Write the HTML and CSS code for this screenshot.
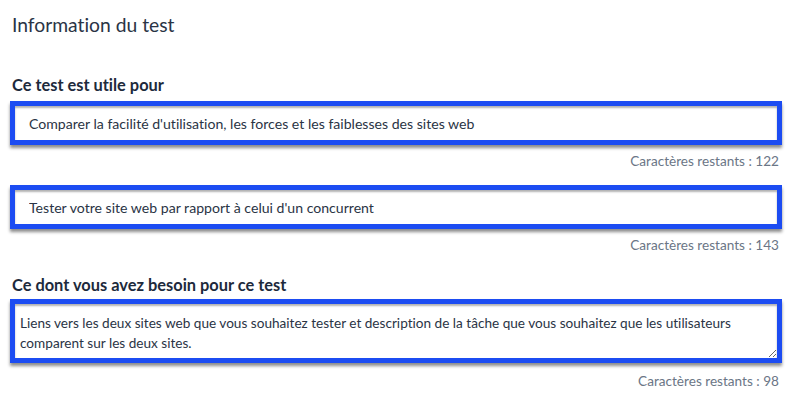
FILE: index.html
```html
<!DOCTYPE html>
<html lang="fr">
<head>
<meta charset="utf-8">
<link rel="stylesheet" href="styles.css">
</head>
<body>
<div class="page">
  <h1 class="title">Information du test</h1>

  <h2 class="label first">Ce test est utile pour</h2>
  <input class="field" type="text" value="Comparer la facilité d'utilisation, les forces et les faiblesses des sites web">
  <div class="counter">Caractères restants : 122</div>

  <input class="field second" type="text" value="Tester votre site web par rapport à celui d'un concurrent">
  <div class="counter">Caractères restants : 143</div>

  <h2 class="label">Ce dont vous avez besoin pour ce test</h2>
  <textarea class="area">Liens vers les deux sites web que vous souhaitez tester et description de la tâche que vous souhaitez que les utilisateurs comparent sur les deux sites.</textarea>
  <div class="counter last">Caractères restants : 98</div>
</div>
</body>
</html>
```

FILE: styles.css
```css
* { box-sizing: border-box; }
html, body {
  margin: 0;
  padding: 0;
  background: #ffffff;
}
.page {
  padding: 13px 13px 0 10px;
  display: flex;
  flex-direction: column;
  font-family: Lato, "Open Sans", sans-serif;
  font-variant-ligatures: none;
  color: #1f2b3d;
}
.title {
  margin: 0 0 0 2px;
  font-size: 19.3px;
  line-height: 24px;
  font-weight: 400;
  color: #2a3445;
}
.label {
  margin: 0 0 6px 2px;
  font-size: 16.4px;
  line-height: 20px;
  font-weight: 700;
  color: #1d2a3c;
}
.label.first { margin-top: 38px; }
.counter + .label { margin-top: 21px; margin-bottom: 4px; }
.field, .area {
  width: 100%;
  border: 5px solid #1c4cf2;
  background: #ffffff;
  box-shadow: 0 3px 3px rgba(0,0,0,0.45), inset 0 2px 2px rgba(0,0,0,0.3);
  font-family: Lato, "Open Sans", sans-serif;
  font-variant-ligatures: none;
  color: #2a3445;
  outline: none;
  margin: 0;
}
.field {
  height: 44px;
  padding: 0 12px 0 14px;
  font-size: 14.1px;
}
.field.second { margin-top: 15px; }
.area {
  height: 64px;
  padding: 9px 5px 0 5px;
  font-size: 13.6px;
  line-height: 20px;
  resize: vertical;
  display: block;
}
.counter {
  margin-top: 7px;
  text-align: right;
  font-size: 13.6px;
  line-height: 18px;
  color: #6b7686;
  padding-right: 3px;
}
.counter.last { margin-top: 9px; }
```
